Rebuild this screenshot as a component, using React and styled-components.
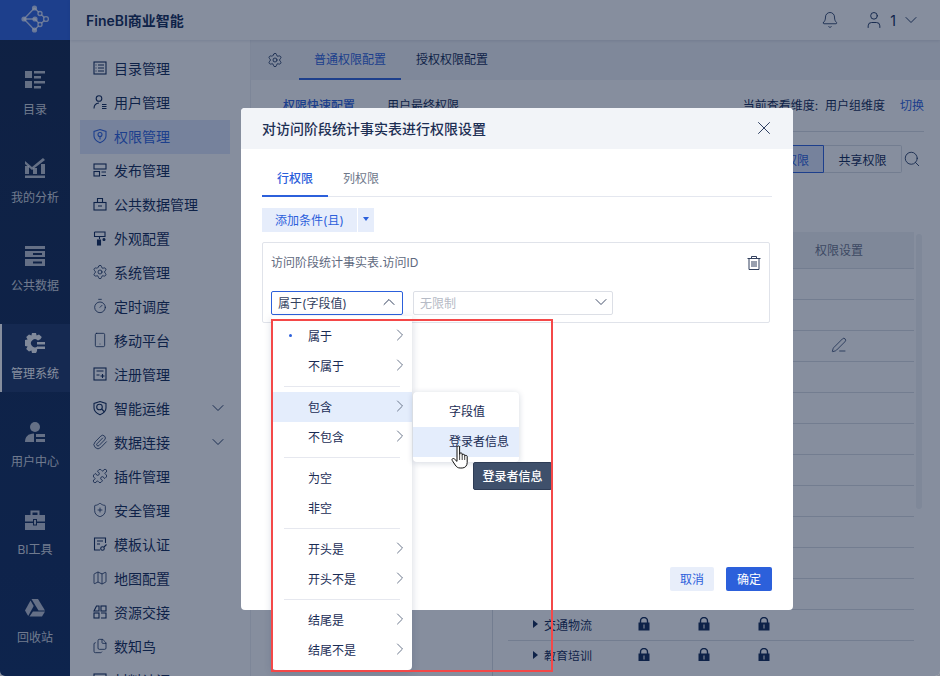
import React from 'react';
import styled, { createGlobalStyle } from 'styled-components';
import {
  Bell, ChevronDown, ChevronRight, ChevronUp, Files, Map, Paperclip, PenLine, Puzzle,
  Search, Settings, ShieldPlus, Smartphone, Timer, User, X,
} from 'lucide-react';

const BLUE = '#2c60db';
const INK = '#0f2753';

const GlobalStyle = createGlobalStyle`
  html, body {
    margin: 0;
    padding: 0;
    background: #8a909c;
  }
  * {
    box-sizing: border-box;
  }
  body {
    font-family: Inter, "Noto Sans CJK SC", "Liberation Sans", sans-serif;
    font-size: 12px;
    color: ${INK};
  }
`;

const Shell = styled.div`
  position: relative;
  width: 940px;
  height: 676px;
  display: flex;
  overflow: hidden;
  background: #fff;
  border-radius: 0 0 5px 5px;
`;

/* far left dark rail */
const Rail = styled.nav`
  width: 70px;
  flex: none;
  display: flex;
  flex-direction: column;
  background: linear-gradient(#102448, #0f2a5c);
`;

const LogoBox = styled.div`
  height: 40px;
  flex: none;
  display: flex;
  align-items: center;
  justify-content: center;
  padding-bottom: 2px;
  background: ${BLUE};
  margin-bottom: 20px;
`;

const RailItem = styled.a`
  height: 68px;
  flex: none;
  margin-bottom: 20px;
  display: flex;
  flex-direction: column;
  align-items: center;
  padding-top: ${(p) => p.$top || 10}px;
  gap: ${(p) => p.$gap || 11}px;
  color: ${(p) => (p.$active ? '#fff' : 'rgba(255,255,255,.82)')};
  background: ${(p) => (p.$active ? '#1c3565' : 'transparent')};
  border-left: 2px solid ${(p) => (p.$active ? '#fff' : 'transparent')};
  padding-right: 2px;
  line-height: 18px;
  svg {
    flex: none;
    fill: ${(p) => (p.$active ? 'rgba(255,255,255,.95)' : 'rgba(255,255,255,.72)')};
  }
`;

const Main = styled.div`
  flex: 1;
  min-width: 0;
  display: flex;
  flex-direction: column;
`;

const TopBar = styled.header`
  height: 40px;
  flex: none;
  display: flex;
  align-items: center;
  padding: 0 19px 0 16px;
  background: #fff;
  box-shadow: 0 1px 3px rgba(15, 39, 83, 0.12);
  position: relative;
`;

const Brand = styled.div`
  font-size: 14px;
  font-weight: 600;
`;

const TopActions = styled.div`
  margin-left: auto;
  display: flex;
  align-items: center;
`;

const UserIcon = styled(User)`
  margin-left: 25px;
`;

const UserName = styled.span`
  font-size: 14px;
  margin: 0 5px 0 6px;
`;

const Columns = styled.div`
  flex: 1;
  min-height: 0;
  display: flex;
`;

const SideMenu = styled.aside`
  width: 170px;
  flex: none;
  padding: 12px 10px 0;
  overflow: hidden;
`;

const SideItem = styled.div`
  height: 34px;
  display: flex;
  align-items: center;
  gap: 6px;
  padding: 0 2px 2px 12px;
  font-size: 14px;
  color: ${(p) => (p.$active ? BLUE : INK)};
  background: ${(p) => (p.$active ? '#dfe7fb' : 'transparent')};
  svg {
    flex: none;
  }
`;

const SideChevron = styled(ChevronDown)`
  margin-left: auto;
`;

const Panel = styled.main`
  flex: 1;
  min-width: 0;
  margin-left: 10px;
  display: flex;
  flex-direction: column;
  border-left: 1px solid #eceef2;
`;

const TabBar = styled.div`
  height: 40px;
  flex: none;
  display: flex;
  align-items: stretch;
  padding-left: 16px;
  background: #f1f3f6;
`;

const GearWrap = styled.div`
  display: flex;
  align-items: center;
  margin-right: 16px;
`;

const PageTab = styled.div`
  display: flex;
  align-items: center;
  padding: 0 15px 1px;
  color: ${(p) => (p.$active ? BLUE : INK)};
  border-bottom: 2px solid ${(p) => (p.$active ? BLUE : 'transparent')};
`;

const SubBar = styled.div`
  height: 52px;
  flex: none;
  display: flex;
  align-items: flex-start;
  gap: 32px;
  margin-right: 16px;
  padding: 17px 0 0 32px;
  border-bottom: 1px solid #d9dde3;
  line-height: 18px;
`;

const SubTab = styled.span`
  color: ${(p) => (p.$active ? BLUE : INK)};
  font-weight: ${(p) => (p.$active ? 500 : 400)};
`;

const Dimension = styled.div`
  margin-left: auto;
  display: flex;
  gap: 15px;
`;

const LinkText = styled.span`
  color: ${BLUE};
`;

const ToolRow = styled.div`
  height: 28px;
  flex: none;
  margin: 13px 19px 59px 0;
  display: flex;
  justify-content: flex-end;
  align-items: center;
`;

const ScopeButton = styled.div`
  width: 78px;
  height: 28px;
  display: flex;
  align-items: center;
  justify-content: center;
  color: ${(p) => (p.$active ? BLUE : INK)};
  background: ${(p) => (p.$active ? '#dfe7fb' : 'transparent')};
  border: 1px solid ${(p) => (p.$active ? BLUE : '#d9dde3')};
  border-left-width: ${(p) => (p.$active ? '1px' : 0)};
  border-radius: ${(p) => (p.$active ? '2px 0 0 2px' : '0 2px 2px 0')};
`;

const SearchWrap = styled.div`
  width: 19px;
  display: flex;
  justify-content: flex-end;
`;

const TableArea = styled.div`
  flex: 1;
  min-height: 0;
  display: flex;
`;

const TreePane = styled.div`
  width: 242px;
  flex: none;
  border-right: 1px solid #d9dde3;
`;

const TableClip = styled.div`
  width: 406px;
  height: 429px;
  margin-left: 15px;
  flex: none;
  overflow: hidden;
`;

const Track = styled.div`
  width: 6px;
  height: 275px;
  margin: 2px 0 0 2px;
  flex: none;
  border-radius: 3px;
  background: #f0f2f5;
`;

const HeadRow = styled.div`
  height: 37px;
  display: grid;
  grid-template-columns: 106px 60px 60px 60px 90px;
  align-items: center;
  padding-bottom: 2px;
  background: #f0f2f5;
  border-bottom: 1px solid #d9dde3;
  color: #6c7488;
  text-align: center;
`;

const Row = styled.div`
  height: 31px;
  display: grid;
  grid-template-columns: 106px 60px 60px 60px 90px;
  align-items: center;
  padding-bottom: 2px;
  border-bottom: 1px solid #d9dde3;
`;

const RowName = styled.div`
  display: flex;
  align-items: center;
  gap: 6px;
  padding-left: 25px;
  white-space: nowrap;
`;

const Caret = styled.i`
  width: 0;
  height: 0;
  border-left: 5px solid ${INK};
  border-top: 4px solid transparent;
  border-bottom: 4px solid transparent;
`;

const Cell = styled.div`
  display: flex;
  justify-content: center;
`;

const Mask = styled.div`
  position: absolute;
  inset: 0;
  background: rgba(13, 29, 61, 0.5);
`;

const Dialog = styled.section`
  position: absolute;
  left: 241px;
  top: 108px;
  width: 552px;
  height: 502px;
  display: flex;
  flex-direction: column;
  background: #fff;
  border-radius: 4px;
`;

const DialogHead = styled.div`
  height: 41px;
  flex: none;
  display: flex;
  align-items: center;
  justify-content: space-between;
  padding: 0 18px 2px 21px;
  font-size: 14px;
  font-weight: 500;
  background: #f2f4f8;
  border-radius: 4px 4px 0 0;
  color: #1d2f54;
`;

const DialogBody = styled.div`
  flex: 1;
  min-height: 0;
  padding: 11px 21px 0;
`;

const Tabs = styled.div`
  height: 37px;
  display: flex;
  border-bottom: 1px solid #e4e7ef;
`;

const Tab = styled.div`
  height: 37px;
  padding: 0 15px;
  display: flex;
  align-items: center;
  color: ${(p) => (p.$active ? BLUE : '#6e778a')};
  font-weight: ${(p) => (p.$active ? 500 : 400)};
  border-bottom: 2px solid ${(p) => (p.$active ? BLUE : 'transparent')};
`;

const AddGroup = styled.div`
  display: flex;
  gap: 1px;
  margin: 11px 0 10px;
`;

const AddButton = styled.button`
  height: 24px;
  width: ${(p) => p.$width}px;
  padding: 0 0 2px;
  border: 0;
  display: flex;
  align-items: center;
  justify-content: center;
  font: inherit;
  color: ${BLUE};
  background: #e6edfb;
`;

const SmallCaret = styled.i`
  border-top: 4px solid ${BLUE};
  border-left: 3px solid transparent;
  border-right: 3px solid transparent;
`;

const ConditionBox = styled.div`
  width: 508px;
  height: 81px;
  padding: 0 8px;
  border: 1px solid #e0e3ea;
  border-radius: 2px;
`;

const ConditionHead = styled.div`
  height: 40px;
  display: flex;
  align-items: center;
  justify-content: space-between;
  color: #5f6a80;
`;

const ConditionLabel = styled.span`
  margin-bottom: 4px;
`;

const SelectRow = styled.div`
  margin-top: 8px;
  display: flex;
  gap: 10px;
`;

const SelectWrap = styled.div`
  position: relative;
  width: ${(p) => p.$width}px;
`;

const SelectBox = styled.div`
  height: 24px;
  padding: 0 ${(p) => (p.$open ? 3 : 1)}px 2px 6px;
  display: flex;
  align-items: center;
  justify-content: space-between;
  border: 1px solid ${(p) => (p.$open ? BLUE : '#dcdfe6')};
  border-radius: 2px;
  color: ${(p) => (p.$open ? '#33415e' : '#b6bbc6')};
  svg {
    color: #33415e;
  }
`;

const Menu = styled.div`
  position: absolute;
  left: 1px;
  top: 25px;
  width: 140px;
  padding: 5px 0;
  background: #fff;
  border-radius: 0 0 4px 4px;
  box-shadow: 0 2px 8px rgba(15, 39, 83, 0.18);
  z-index: 2;
`;

const MenuItem = styled.div`
  position: relative;
  height: 30px;
  display: grid;
  grid-template-columns: 36px 1fr 24px;
  align-items: center;
  padding-bottom: 2px;
  color: #1a2c55;
  background: ${(p) => (p.$hover ? '#e4edfc' : 'transparent')};
  > svg {
    color: #6b778c;
    justify-self: center;
  }
`;

const Dot = styled.i`
  width: 3px;
  height: 3px;
  border-radius: 50%;
  background: ${BLUE};
  justify-self: center;
`;

const Sep = styled.div`
  height: 1px;
  margin: 5px 12px;
  background: #e6e8ef;
`;

const SubMenu = styled.div`
  position: absolute;
  left: 141px;
  top: 0;
  width: 106px;
  padding: 5px 0;
  background: #fff;
  border-radius: 4px;
  box-shadow: 0 1px 6px rgba(15, 39, 83, 0.18);
`;

const SubItem = styled.div`
  position: relative;
  height: 30px;
  padding: 0 0 3px 36px;
  display: flex;
  align-items: center;
  color: #1a2c55;
  white-space: nowrap;
  background: ${(p) => (p.$hover ? '#e4edfc' : 'transparent')};
`;

const Tooltip = styled.div`
  position: absolute;
  left: 60px;
  top: 35px;
  width: 79px;
  height: 28px;
  padding-bottom: 2px;
  display: flex;
  align-items: center;
  justify-content: center;
  color: #fff;
  font-weight: 500;
  background: #3f506b;
  border: 1px solid #2e3c55;
  border-radius: 2px;
  z-index: 3;
`;

const Pointer = styled.svg`
  position: absolute;
  left: 38px;
  top: 18px;
  z-index: 4;
`;

const Footer = styled.div`
  flex: none;
  display: flex;
  justify-content: flex-end;
  gap: 12px;
  padding: 0 21px 19px;
`;

const FootButton = styled.button`
  height: 24px;
  width: ${(p) => (p.$primary ? 46 : 44)}px;
  padding: 0 0 2px;
  border: 0;
  border-radius: 2px;
  font: inherit;
  color: ${(p) => (p.$primary ? '#fff' : BLUE)};
  background: ${(p) => (p.$primary ? BLUE : '#e8eefa')};
`;

/* red annotation drawn over the screenshot */
const RedFrame = styled.div`
  position: absolute;
  left: 271px;
  top: 319px;
  width: 282px;
  height: 353px;
  border: 2px solid #f44848;
  z-index: 5;
  pointer-events: none;
`;

const Logo = () => (
  <svg width="30" height="30" viewBox="0 0 30 30" fill="none">
    <g stroke="rgba(255,255,255,.72)" strokeWidth="1.4">
      <path d="M14.5 4 L4 15 L14.5 26 M4 15 H15 L20 20.5 M14.5 4 L20 9.5 L26 15 L20 20.5 L14.5 26" />
      <circle cx="20" cy="9.5" r="2" fill="#2c60db" />
      <circle cx="26" cy="15" r="2.4" fill="#2c60db" />
      <circle cx="20" cy="20.5" r="2" fill="#2c60db" />
    </g>
    <g fill="rgba(255,255,255,.72)">
      <circle cx="14.5" cy="4" r="2.6" />
      <circle cx="4" cy="15" r="2.6" />
      <circle cx="15" cy="15" r="2.6" />
      <circle cx="14.5" cy="26" r="2.6" />
    </g>
  </svg>
);

const CatalogIcon = () => (
  <svg width="20" height="18" viewBox="0 0 20 18">
    <rect x="0" y="0" width="7" height="7" />
    <rect x="0" y="10" width="7" height="7" />
    <rect x="9" y="0" width="11" height="2.5" />
    <rect x="9" y="5" width="7" height="2.5" />
    <rect x="9" y="10" width="11" height="2.5" />
    <rect x="9" y="15" width="7" height="2.5" />
  </svg>
);

const AnalysisIcon = () => (
  <svg width="20" height="20" viewBox="0 0 20 20">
    <rect x="0" y="17.5" width="20" height="2.5" />
    <rect x="0" y="8" width="4" height="8" />
    <rect x="8" y="10" width="4" height="6" />
    <rect x="16" y="6" width="4" height="10" />
    <path d="M0 3 L7 9 L18 0 L20 2 L7 12 L0 6Z" />
  </svg>
);

const SharedDataIcon = () => (
  <svg width="20" height="20" viewBox="0 0 20 20" fillRule="evenodd">
    <rect x="0" y="0" width="20" height="3" />
    <path d="M0 5 H20 V11 H0Z M8 7 V9 H17 V7Z" />
    <path d="M0 13 H20 V20 H0Z M8 15.5 V17.5 H17 V15.5Z" />
  </svg>
);

const GearIcon = () => (
  <svg width="20" height="20" viewBox="0 0 20 20" fillRule="evenodd">
    <g>
      <path d="M7 0 H11 L11.6 2.6 L14 1.4 L16.8 4 L15.4 6.2 L13 7.6 A4 4 0 1 0 12.4 13.4 L12 18 L11 20 H7 L6.4 17.4 L4 18.6 L1.2 16 L2.6 13.6 L0 13 V7 L2.6 6.4 L1.2 4 L4 1.4 L6.4 2.6Z" />
      <rect x="12" y="9" width="8" height="2.5" />
      <rect x="12" y="13.5" width="8" height="2.5" />
    </g>
  </svg>
);

const UserCenterIcon = () => (
  <svg width="20" height="20" viewBox="0 0 20 20">
    <circle cx="10" cy="5" r="5" />
    <path d="M0 20 C0 15 3 11.5 9 11.5 L9 20Z" />
    <rect x="11" y="12" width="9" height="3" />
    <rect x="11" y="17" width="9" height="3" />
  </svg>
);

const ToolboxIcon = () => (
  <svg width="20" height="20" viewBox="0 0 20 20" fillRule="evenodd">
    <path d="M5.5 5 V0.5 H14.5 V5 H12.5 V2.5 H7.5 V5Z" />
    <rect x="0" y="5" width="20" height="6.5" />
    <rect x="0" y="13" width="20" height="7" />
    <rect x="8" y="9" width="4" height="6.5" fill="#0f2753" />
    <rect x="9" y="10" width="2" height="4.5" />
  </svg>
);

const RecycleIcon = () => (
  <svg width="20" height="18" viewBox="0 0 20 18">
    <path d="M6.5 0 H13 L20 11.5 H13.5Z" />
    <path d="M5.5 1.5 L8.7 7 L3.2 17 L0 11.5Z" />
    <path d="M4.5 17.5 L8 12.5 H20 L17 17.5Z" />
  </svg>
);

const Line = ({ children }) => (
  <svg width="16" height="16" viewBox="0 0 16 16" fill="none" stroke="currentColor" strokeWidth="1.1">
    {children}
  </svg>
);

const sideItems = [
  { label: '目录管理', icon: <Line><rect x="2" y="2" width="12" height="12" /><path d="M3.5 5H4.5M6 5H12M3.5 8H4.5M6 8H12M3.5 11H4.5M6 11H12" /></Line> },
  { label: '用户管理', icon: <Line><circle cx="7" cy="4.5" r="2.8" /><path d="M2 14.5C2 11.5 4 9.3 7 9M10 10.5H14.5M10 12.5H14.5M10 14.5H14.5" /></Line> },
  { label: '权限管理', active: true, icon: <Line><path d="M8 1.5L14 3.5V8C14 11.5 11 13.5 8 14.8C5 13.5 2 11.5 2 8V3.5Z" /><circle cx="8" cy="6.5" r="2" /><path d="M8 8.5V11.5" /></Line> },
  { label: '发布管理', icon: <Line><rect x="2" y="2" width="12" height="5" /><rect x="2" y="9.5" width="5.5" height="4.5" /><path d="M9.5 10H14M9.5 13.5H14" /></Line> },
  { label: '公共数据管理', icon: <Line><rect x="2" y="6.5" width="12" height="7.5" /><path d="M5.5 6.5V2.5H10.5V6.5M6 10H10" /></Line> },
  { label: '外观配置', icon: <Line><path d="M2.5 2H13V6.5H7.5V9M2.5 2V6.5H7.5" /><rect x="5.5" y="10" width="3" height="5" fill="currentColor" /><circle cx="12" cy="9.5" r="1" fill="currentColor" /></Line> },
  { label: '系统管理', icon: <Settings size={16} strokeWidth={1.2} /> },
  { label: '定时调度', icon: <Timer size={16} strokeWidth={1.2} /> },
  { label: '移动平台', icon: <Smartphone size={16} strokeWidth={1.2} /> },
  { label: '注册管理', icon: <Line><rect x="2" y="2" width="12" height="12" /><path d="M4.5 5H11.5M4.5 9H7.5M10.5 8V12M8.5 10H12.5" /></Line> },
  { label: '智能运维', chevron: true, icon: <Line><path d="M8 1.5L14 3.5V8C14 11.5 11 13.5 8 14.8C5 13.5 2 11.5 2 8V3.5Z" /><circle cx="7.5" cy="7" r="2.8" /><path d="M9.7 9L12.5 12" /></Line> },
  { label: '数据连接', chevron: true, icon: <Paperclip size={16} strokeWidth={1.2} /> },
  { label: '插件管理', icon: <Puzzle size={16} strokeWidth={1.2} /> },
  { label: '安全管理', icon: <ShieldPlus size={16} strokeWidth={1.2} /> },
  { label: '模板认证', icon: <Line><path d="M13.5 7V2H2.5V14H8M5 5H11M5 8H8" /><circle cx="10.5" cy="12.5" r="1.8" /><path d="M12 11L14.5 8.5" /></Line> },
  { label: '地图配置', icon: <Map size={16} strokeWidth={1.2} /> },
  { label: '资源交接', icon: <Line><rect x="9" y="2" width="5" height="5" /><rect x="2" y="9" width="5" height="5" /><path d="M2 7L4.5 2H7V7ZM9 9H14V14H9" /></Line> },
  { label: '数知鸟', icon: <Files size={16} strokeWidth={1.2} /> },
  { label: '材料认证', icon: <Line><rect x="2" y="2" width="12" height="12" /></Line> },
];

const Lock = () => (
  <svg width="12" height="14" viewBox="0 0 12 14" fill="none">
    <path d="M2.5 6V4a3.5 3.5 0 0 1 7 0V6" stroke={INK} strokeWidth="1.4" />
    <rect x="0.5" y="5.5" width="11" height="8" fill={INK} />
    <rect x="5" y="7.5" width="2" height="4" fill="#8d95a6" />
  </svg>
);

const rowData = [
  {}, {}, { edit: true }, {}, {}, {}, {}, {}, {}, {}, {},
  { name: '交通物流', locked: true },
  { name: '教育培训', locked: true },
];

const menuGroups = [
  [{ label: '属于', picked: true, arrow: true }, { label: '不属于', arrow: true }],
  [{ label: '包含', arrow: true, hover: true }, { label: '不包含', arrow: true }],
  [{ label: '为空' }, { label: '非空' }],
  [{ label: '开头是', arrow: true }, { label: '开头不是', arrow: true }],
  [{ label: '结尾是', arrow: true }, { label: '结尾不是', arrow: true }],
];

const HandCursor = () => (
  <Pointer width="19" height="24" viewBox="0 0 19 24">
    <path
      d="M6 2C6 .6 8.6 .6 8.6 2V9.5V8.8C8.6 7.6 11.2 7.6 11.2 8.8V10.2C11.2 9 13.7 9 13.7 10.2V11.2C13.7 10.1 16.2 10.1 16.2 11.4V17.5C16.2 20.6 14.2 23 11.2 23H9.2C6.8 23 5.6 22 4.2 20L1.2 15.4C.4 14 2.2 12.8 3.3 13.9L6 16.4Z"
      fill="#fff"
      stroke="#111"
      strokeWidth="1"
      strokeLinejoin="round"
    />
    <path d="M8.6 9.5V15M11.2 10.2V15M13.7 11.2V15" stroke="#111" strokeWidth="0.8" fill="none" />
  </Pointer>
);

const App = () => {
  return (
    <Shell>
      <GlobalStyle />
      <Rail>
        <LogoBox><Logo /></LogoBox>
        <RailItem $top={11} $gap={12}><CatalogIcon />目录</RailItem>
        <RailItem><AnalysisIcon />我的分析</RailItem>
        <RailItem><SharedDataIcon />公共数据</RailItem>
        <RailItem $active $top={9} $gap={12}><GearIcon />管理系统</RailItem>
        <RailItem><UserCenterIcon />用户中心</RailItem>
        <RailItem><ToolboxIcon />BI工具</RailItem>
        <RailItem $top={11} $gap={12}><RecycleIcon />回收站</RailItem>
      </Rail>

      <Main>
        <TopBar>
          <Brand>FineBI商业智能</Brand>
          <TopActions>
            <Bell size={18} strokeWidth={1.1} />
            <UserIcon size={20} strokeWidth={1.1} />
            <UserName>1</UserName>
            <ChevronDown size={20} strokeWidth={1.1} />
          </TopActions>
        </TopBar>

        <Columns>
          <SideMenu>
            {sideItems.map((item) => (
              <SideItem key={item.label} $active={item.active}>
                {item.icon}
                {item.label}
                {item.chevron && <SideChevron size={20} strokeWidth={1.1} />}
              </SideItem>
            ))}
          </SideMenu>

          <Panel>
            <TabBar>
              <GearWrap><Settings size={16} strokeWidth={1.2} /></GearWrap>
              <PageTab $active>普通权限配置</PageTab>
              <PageTab>授权权限配置</PageTab>
            </TabBar>

            <SubBar>
              <SubTab $active>权限快速配置</SubTab>
              <SubTab>用户最终权限</SubTab>
              <Dimension>
                <span>当前查看维度:&nbsp;&nbsp;用户组维度</span>
                <LinkText>切换</LinkText>
              </Dimension>
            </SubBar>

            <ToolRow>
              <ScopeButton $active>管理权限</ScopeButton>
              <ScopeButton>共享权限</ScopeButton>
              <SearchWrap><Search size={18} strokeWidth={1.1} /></SearchWrap>
            </ToolRow>

            <TableArea>
              <TreePane />
              <TableClip>
                <HeadRow>
                  <span />
                  <span />
                  <span />
                  <span />
                  <span>权限设置</span>
                </HeadRow>
                {rowData.map((row, i) => (
                  <Row key={i}>
                    <RowName>
                      {row.name && <Caret />}
                      {row.name}
                    </RowName>
                    <Cell>{row.locked && <Lock />}</Cell>
                    <Cell>{row.locked && <Lock />}</Cell>
                    <Cell>{row.locked && <Lock />}</Cell>
                    <Cell>{row.edit && <PenLine size={16} strokeWidth={1.1} />}</Cell>
                  </Row>
                ))}
              </TableClip>
              <Track />
            </TableArea>
          </Panel>
        </Columns>
      </Main>

      <Mask />

      <Dialog>
        <DialogHead>
          对访问阶段统计事实表进行权限设置
          <X size={22} strokeWidth={1} />
        </DialogHead>
        <DialogBody>
          <Tabs>
            <Tab $active>行权限</Tab>
            <Tab>列权限</Tab>
          </Tabs>
          <AddGroup>
            <AddButton $width={95}>添加条件(且)</AddButton>
            <AddButton $width={16}><SmallCaret /></AddButton>
          </AddGroup>
          <ConditionBox>
            <ConditionHead>
              <ConditionLabel>访问阶段统计事实表.访问ID</ConditionLabel>
              <svg width="14" height="14" viewBox="0 0 14 14" fill="none" stroke="#33415e" strokeWidth="1">
                <path d="M.5 2.5H13.5M4.5 2.5V.5H9.5V2.5M2 2.5V13.5H12V2.5M5 5V11M7 5V11M9 5V11" />
              </svg>
            </ConditionHead>
            <SelectRow>
              <SelectWrap $width={132}>
                <SelectBox $open>
                  属于(字段值)
                  <ChevronUp size={20} strokeWidth={1.2} />
                </SelectBox>
                <Menu>
                  {menuGroups.map((group, g) => (
                    <React.Fragment key={g}>
                      {g > 0 && <Sep />}
                      {group.map((item) => (
                        <MenuItem key={item.label} $hover={item.hover}>
                          {item.picked ? <Dot /> : <span />}
                          {item.label}
                          {item.arrow && <ChevronRight size={20} strokeWidth={1.2} />}
                          {item.hover && (
                            <SubMenu>
                              <SubItem>字段值</SubItem>
                              <SubItem $hover>
                                登录者信息
                                <Tooltip>登录者信息</Tooltip>
                                <HandCursor />
                              </SubItem>
                            </SubMenu>
                          )}
                        </MenuItem>
                      ))}
                    </React.Fragment>
                  ))}
                </Menu>
              </SelectWrap>
              <SelectWrap $width={200}>
                <SelectBox>
                  无限制
                  <ChevronDown size={20} strokeWidth={1.1} />
                </SelectBox>
              </SelectWrap>
            </SelectRow>
          </ConditionBox>
        </DialogBody>
        <Footer>
          <FootButton>取消</FootButton>
          <FootButton $primary>确定</FootButton>
        </Footer>
      </Dialog>

      <RedFrame />
    </Shell>
  );
};

export default App;
